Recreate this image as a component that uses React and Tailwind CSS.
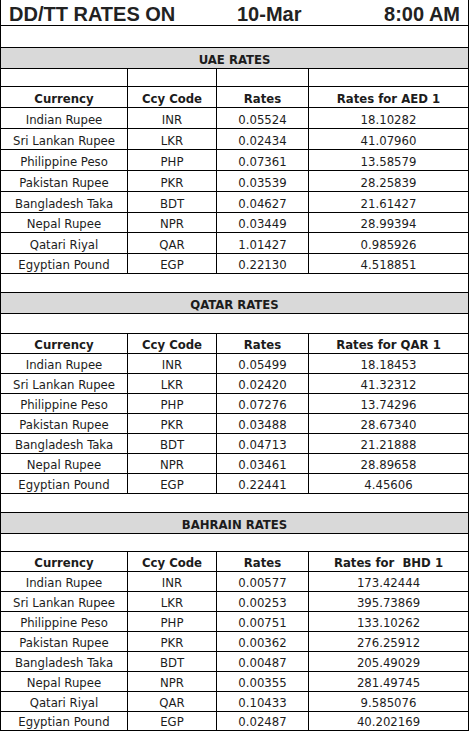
import React from 'react';

const heights = {
  18: 'h-[18px]',
  19: 'h-[19px]',
  20: 'h-[20px]',
  21: 'h-[21px]',
  22: 'h-[22px]',
};

const sections = [
  {
    title: 'UAE RATES',
    per: 'Rates for AED 1',
    blankCols: true,
    gaps: [22, 21, 18, 21],
    rowH: [21, 21, 21, 21, 21, 20, 21, 20],
    rows: [
      ['Indian Rupee', 'INR', '0.05524', '18.10282'],
      ['Sri Lankan Rupee', 'LKR', '0.02434', '41.07960'],
      ['Philippine Peso', 'PHP', '0.07361', '13.58579'],
      ['Pakistan Rupee', 'PKR', '0.03539', '28.25839'],
      ['Bangladesh Taka', 'BDT', '0.04627', '21.61427'],
      ['Nepal Rupee', 'NPR', '0.03449', '28.99394'],
      ['Qatari Riyal', 'QAR', '1.01427', '0.985926'],
      ['Egyptian Pound', 'EGP', '0.22130', '4.518851'],
    ],
  },
  {
    title: 'QATAR RATES',
    per: 'Rates for QAR 1',
    blankCols: false,
    gaps: [19, 21, 20, 20],
    rowH: [20, 20, 20, 20, 20, 20, 20],
    rows: [
      ['Indian Rupee', 'INR', '0.05499', '18.18453'],
      ['Sri Lankan Rupee', 'LKR', '0.02420', '41.32312'],
      ['Philippine Peso', 'PHP', '0.07276', '13.74296'],
      ['Pakistan Rupee', 'PKR', '0.03488', '28.67340'],
      ['Bangladesh Taka', 'BDT', '0.04713', '21.21888'],
      ['Nepal Rupee', 'NPR', '0.03461', '28.89658'],
      ['Egyptian Pound', 'EGP', '0.22441', '4.45606'],
    ],
  },
  {
    title: 'BAHRAIN RATES',
    per: 'Rates for\u00a0 BHD 1',
    blankCols: false,
    gaps: [19, 21, 18, 20],
    rowH: [20, 20, 20, 20, 20, 20, 20, 19],
    rows: [
      ['Indian Rupee', 'INR', '0.00577', '173.42444'],
      ['Sri Lankan Rupee', 'LKR', '0.00253', '395.73869'],
      ['Philippine Peso', 'PHP', '0.00751', '133.10262'],
      ['Pakistan Rupee', 'PKR', '0.00362', '276.25912'],
      ['Bangladesh Taka', 'BDT', '0.00487', '205.49029'],
      ['Nepal Rupee', 'NPR', '0.00355', '281.49745'],
      ['Qatari Riyal', 'QAR', '0.10433', '9.585076'],
      ['Egyptian Pound', 'EGP', '0.02487', '40.202169'],
    ],
  },
];

function Cells({ h, cells, bold }) {
  return (
    <div className={`grid grid-cols-[126px_89px_92px_160px] border-b border-black ${heights[h]}`}>
      {cells.map((c, i) => (
        <div
          key={i}
          className={`flex items-end justify-center leading-[16px] whitespace-nowrap ${i > 0 ? 'border-l border-black' : ''} ${bold ? 'font-bold' : ''}`}
        >
          {c}
        </div>
      ))}
    </div>
  );
}

function Full({ h, gray, children }) {
  return (
    <div
      className={`flex items-end justify-center border-b border-black leading-[16px] font-bold ${heights[h]} ${gray ? 'bg-[#d9d9d9]' : ''}`}
    >
      {children}
    </div>
  );
}

function Section({ s }) {
  return (
    <>
      <Full h={s.gaps[0]} />
      <Full h={s.gaps[1]} gray>{s.title}</Full>
      {s.blankCols ? <Cells h={s.gaps[2]} cells={['', '', '', '']} /> : <Full h={s.gaps[2]} />}
      <Cells h={s.gaps[3]} cells={['Currency', 'Ccy Code', 'Rates', s.per]} bold />
      {s.rows.map((r, i) => (
        <Cells key={i} h={s.rowH[i]} cells={r} />
      ))}
    </>
  );
}

export default function App() {
  return (
    <div className="w-[472px] h-[736px] bg-white overflow-hidden">
      <div
        className="w-[469px] border-l border-r border-black text-[13px] text-[#1c1c1c]"
        style={{ fontFamily: '"DejaVu Sans Condensed", "DejaVu Sans", sans-serif', fontStretch: 'condensed' }}
      >
        <div
          className="flex h-[26px] border-b border-black pl-[8px] pr-[8px] pt-[1px] text-[20px] font-bold leading-[26px] text-[#222]"
          style={{ fontFamily: '"Liberation Sans", Arial, sans-serif', fontStretch: 'normal' }}
        >
          <span className="w-[228px]">DD/TT RATES ON</span>
          <span>10-Mar</span>
          <span className="ml-auto">8:00 AM</span>
        </div>
        {sections.map((s) => (
          <Section key={s.title} s={s} />
        ))}
      </div>
    </div>
  );
}
